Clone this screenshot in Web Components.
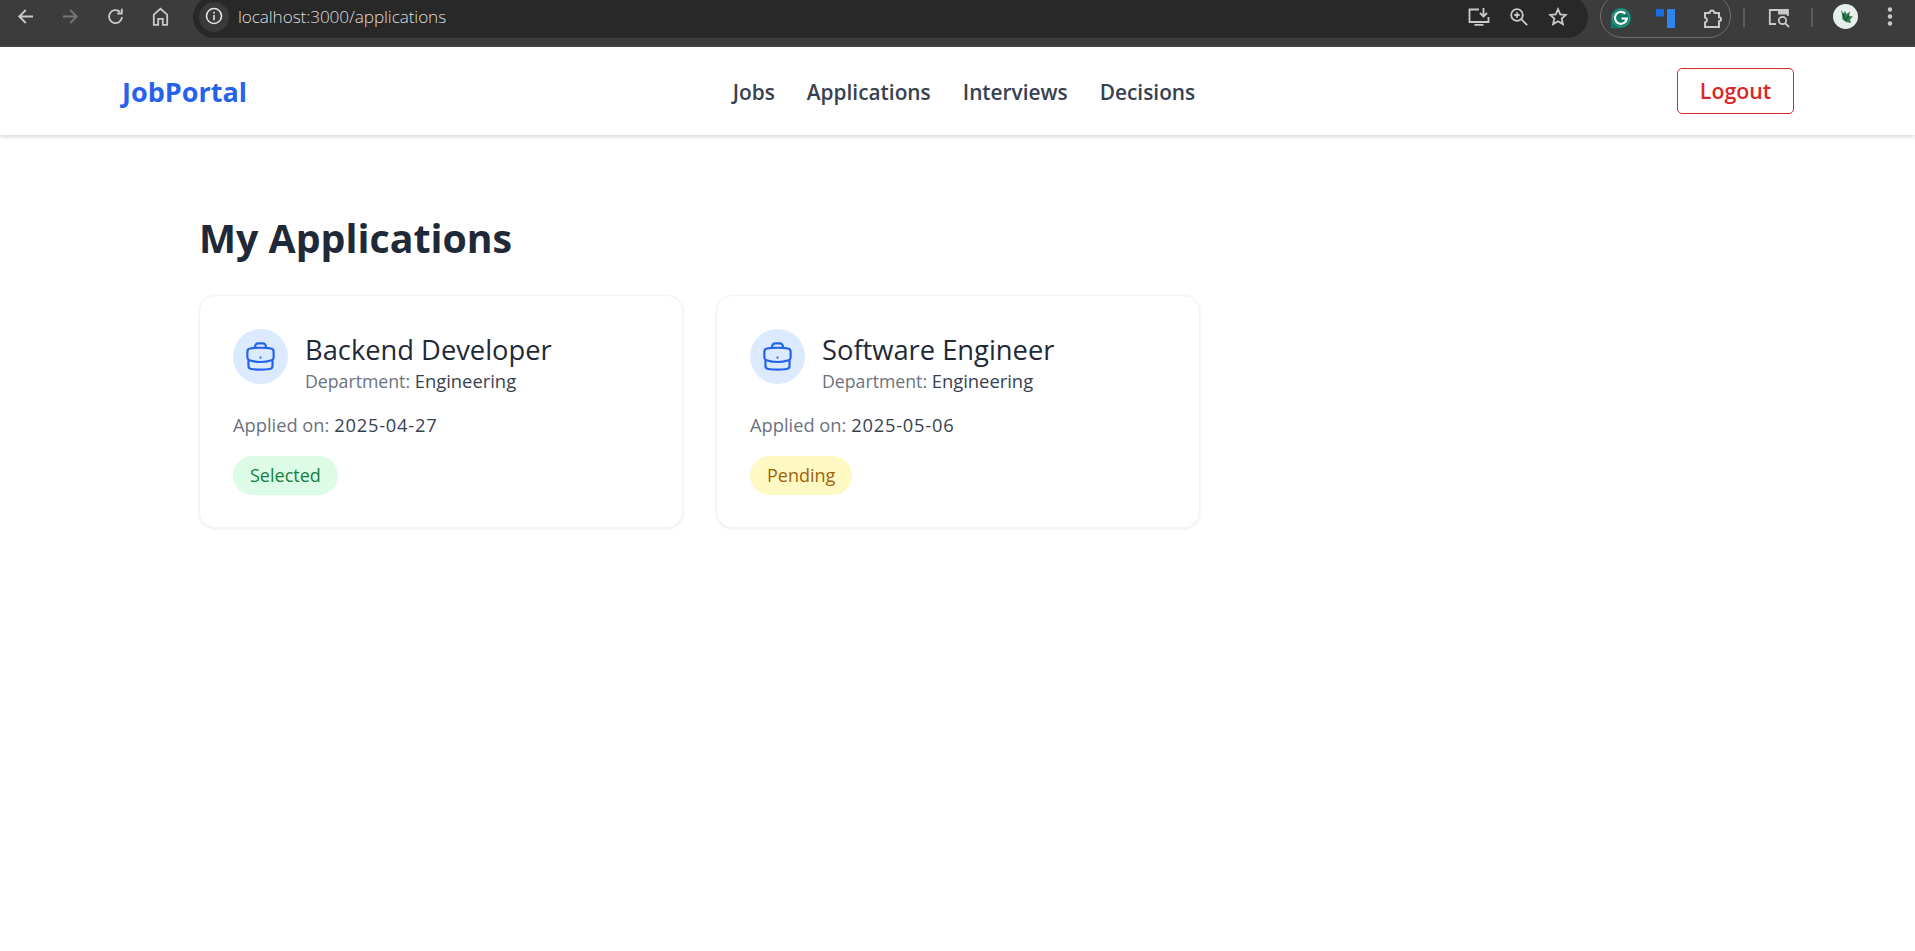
<!DOCTYPE html>
<html lang="en"><head><meta charset="utf-8"><title>JobPortal</title>
<style>
html,body{margin:0;padding:0;background:#fff;height:100%;overflow:hidden}
body{font-family:"Open Sans","Noto Sans",sans-serif;display:flex;flex-direction:column;height:951px}
</style></head><body>
<browser-bar></browser-bar>
<site-nav></site-nav>
<main-page>
  <app-card title-text="Backend Developer" dept="Engineering" date="2025-04-27" status="Selected"></app-card>
  <app-card title-text="Software Engineer" dept="Engineering" date="2025-05-06" status="Pending"></app-card>
</main-page>
<script>
function def(name, html){
  customElements.define(name, class extends HTMLElement{
    constructor(){super();const r=this.attachShadow({mode:'open'});if(typeof html!=='function')r.innerHTML=html;}
    connectedCallback(){ if(typeof html==='function'){this.shadowRoot.innerHTML=html(this);} }
  });
}
const ic='fill="none" stroke="#c9c9c9" stroke-width="1.8"';
def('browser-bar',`<style>
:host{display:flex;align-items:flex-start;height:47px;background:#3c3c3c;box-sizing:border-box;border-bottom:2px solid #464646;flex:none;overflow:hidden}
.btn{width:20px;height:20px;display:flex;flex:none;margin-top:7px}
.left{display:flex;gap:25px;padding-left:16px;width:193px;flex:none;box-sizing:border-box}
.addr{flex:none;width:1395px;height:42px;margin-top:-4px;background:#282828;border-radius:21px;display:flex;align-items:center;box-sizing:border-box;padding-left:6px}
.info{width:30px;height:30px;border-radius:50%;background:#3a3a3a;display:flex;align-items:center;justify-content:center;flex:none}
.url{font:300 17.2px "Open Sans",sans-serif;color:#dcdcdc;margin:-1px 0 0 9px;flex:1;letter-spacing:-.1px}
.acts{display:flex;gap:19px;padding-right:20px;align-items:center}
.ext{margin:-6px 0 0 12px;width:131px;height:44px;border:1.5px solid #6e6e6e;border-radius:22px;box-sizing:border-box;display:flex;align-items:center;justify-content:space-between;padding:4px 7.500px 0 9px;flex:none}
.sep{width:2px;height:19px;background:#5c5c5c;margin-top:8px;flex:none}
.avatar{width:25px;height:25px;border-radius:50%;background:#e8eeea;margin:4px 0 0 20px;display:flex;align-items:center;justify-content:center;flex:none}
</style>
<div class="left">
<svg class="btn" viewBox="0 0 20 20" ${ic}><path d="M17 9.500H3.500M9.800 3 3.200 9.500 9.800 16"/></svg>
<svg class="btn" viewBox="0 0 20 20" fill="none" stroke="#767676" stroke-width="1.8"><path d="M2 9.500h13.500M9.200 3l6.600 6.500L9.200 16"/></svg>
<svg class="btn" viewBox="0 0 20 20" ${ic}><path d="M16 10a6.500 6.500 0 1 1-1.900-5"/><path d="M15.800 1.800V6.500H11.200"/></svg>
<svg class="btn" viewBox="0 0 20 20" ${ic}><path d="M2.800 17.800V7.600L9.500 1.800l6.700 5.800v10.200h-4.400v-6h-4.600v6z"/></svg>
</div>
<div class="addr">
<div class="info"><svg width="18" height="18" viewBox="0 0 18 18" fill="none" stroke="#e3e3e3" stroke-width="1.6" style="margin-top:-2px"><circle cx="9" cy="9" r="7.500"/><path d="M9 8v5.200M9 4.800v1.800"/></svg></div>
<span class="url">localhost:3000/applications</span>
<div class="acts">
<svg width="22" height="20" viewBox="0 0 22 20" ${ic}><path d="M11 2.500H1.500v12.500h19V10M6.500 17.800h9" /><path d="M15.500 1v8M12 6l3.500 3.500L19 6"/></svg>
<svg width="20" height="20" viewBox="0 0 20 20" ${ic}><circle cx="8" cy="8" r="5.800"/><path d="M12.200 12.200l6 6M5.300 8h5.400M8 5.300v5.400"/></svg>
<svg width="20" height="20" viewBox="0 0 20 20" ${ic}><path d="M10 2.200l2.300 5.100 5.500.6-4.100 3.700 1.200 5.500L10 14.300l-4.900 2.800 1.200-5.500L2.200 7.900l5.500-.6z"/></svg>
</div></div>
<div class="ext">
<svg width="22" height="22" viewBox="0 0 22 22"><path d="M11 .8a10.200 10.200 0 0 1 0 20.400H1.400a.6.600 0 0 1-.6-.6V11A10.200 10.200 0 0 1 11 .8z" fill="#0d7a66"/><circle cx="11" cy="11" r="8.600" fill="none" stroke="#4aa593" stroke-width=".8"/><path d="M15.400 6.800a6 6 0 1 0 1.500 4.700h-5.400" fill="none" stroke="#fff" stroke-width="2.200"/></svg>
<svg width="19" height="19" viewBox="0 0 19 19" style="margin-right:2px"><rect x="0" y="0" width="8" height="7.500" fill="#1a6fe0"/><rect x="11" y="0" width="8" height="19" rx="1" fill="#2b86f0"/></svg>
<svg width="21" height="21" viewBox="0 0 21 21" fill="none" stroke="#c9c9c9" stroke-width="2"><path d="M3 5h4.500a2.500 2.500 0 0 1 5 0H17v4.200a2 2 0 0 1 0 4V19H3v-4.500c1.500-.5 2-1.500 2-2.500S4.500 10 3 9.500z"/></svg>
</div>
<div class="sep" style="margin-left:12px"></div>
<svg style="margin:7px 0 0 23px;flex:none" width="22" height="22" viewBox="0 0 22 22" ${ic}><path d="M8 17H1.800V3h18v6"/><path d="M11 3h8.800v3.500H11z" fill="#c9c9c9"/><circle cx="14.500" cy="13.500" r="3.700"/><path d="M17.300 16.300 21 20"/></svg>
<div class="sep" style="margin-left:21px"></div>
<div class="avatar"><svg width="18" height="18" viewBox="0 0 18 18"><path d="M4 2l2.500 3.500L8 3l1.500 3L13 3.500 12 8l4 .5-3 3 1 3.500-5-1-3.500-2.500L5 7z" fill="#2f7d55"/><path d="M6 6l3 6 3-5" fill="none" stroke="#14512f" stroke-width="1.200"/></svg></div>
<svg style="margin:6px 0 0 29px;flex:none" width="6" height="22" viewBox="0 0 6 22" fill="#c9c9c9"><circle cx="3" cy="3.500" r="2.200"/><circle cx="3" cy="10.500" r="2.200"/><circle cx="3" cy="17.500" r="2.200"/></svg>
`);
def('site-nav',`<style>
:host{display:flex;align-items:center;justify-content:space-between;height:88px;background:#fff;box-shadow:0 2px 4px rgba(0,0,0,.15);flex:none;box-sizing:border-box;padding:0 121px 0 122px;position:relative;z-index:1}
.logo{font-size:27px;font-weight:700;color:#2563eb}
.links{display:flex;gap:32px;margin:1px 0 0 4px}
a{font-size:20.85px;font-weight:600;color:#374151;text-decoration:none}
button{font:600 21.3px "Open Sans",sans-serif;color:#dc2626;background:#fff;border:1px solid #dc2626;border-radius:5px;width:117px;height:46px;padding:0;margin-top:-1px}
</style>
<span class="logo">JobPortal</span>
<nav class="links"><a>Jobs</a><a>Applications</a><a>Interviews</a><a>Decisions</a></nav>
<button>Logout</button>`);
def('main-page',`<style>
:host{display:block;padding:81px 0 0 199px;flex:1}
h1{font-size:39.3px;font-weight:700;color:#1f2937;margin:0 0 35px;line-height:44px}
.grid{display:grid;grid-template-columns:484px 484px;gap:33px}
</style><h1>My Applications</h1><div class="grid"><slot></slot></div>`);
def('app-card',el=>{const s=el.getAttribute('status');const sel=s==='Selected';return `<style>
:host{display:block;box-sizing:border-box;height:233px;background:#fff;border:1px solid #f3f4f6;border-radius:16px;box-shadow:0 1px 3px rgba(0,0,0,.08);padding:33px}
.head{display:flex;gap:17px;align-items:flex-start}
.ico{width:55px;height:55px;border-radius:50%;background:#dbeafe;display:flex;align-items:center;justify-content:center;flex:none}
.txt{padding-top:3px}
h2{font-size:27.3px;font-weight:500;color:#1f2937;margin:0;line-height:36px}
.dept{font-size:17.7px;color:#6b7280;line-height:26px;height:26px}
.dept b{font-weight:400;color:#374151;font-size:18.4px;line-height:1}
.date{font-size:18.3px;color:#6b7280;line-height:28px;margin-top:17px}
.date b{font-weight:500;color:#374151;letter-spacing:.8px}
.pill{display:block;width:fit-content;margin-top:17px;padding:0 17px;height:39px;line-height:39px;border-radius:20px;font-size:18px;font-weight:500;background:${sel?'#dcfce7':'#fef9c3'};color:${sel?'#15803d':'#a16207'}}
</style>
<div class="head"><div class="ico"><svg width="35" height="35" viewBox="0 0 24 24" fill="none" stroke="#2563eb" stroke-width="1.5" stroke-linecap="round" stroke-linejoin="round"><path d="M20.250 14.150v4.250c0 1.094-.787 2.036-1.872 2.180-2.087.277-4.216.420-6.378.420s-4.291-.143-6.378-.420c-1.085-.144-1.872-1.086-1.872-2.180v-4.250m16.500 0a2.180 2.180 0 0 0 .75-1.661V8.706c0-1.081-.768-2.015-1.837-2.175a48.114 48.114 0 0 0-3.413-.387m4.500 8.006c-.194.165-.42.295-.673.380A23.978 23.978 0 0 1 12 15.750c-2.648 0-5.195-.429-7.577-1.220a2.016 2.016 0 0 1-.673-.380m0 0A2.180 2.180 0 0 1 3 12.489V8.706c0-1.081.768-2.015 1.837-2.175a48.111 48.111 0 0 1 3.413-.387m7.500 0V5.250A2.250 2.250 0 0 0 13.500 3h-3a2.250 2.250 0 0 0-2.250 2.250v.894m7.500 0a48.667 48.667 0 0 0-7.500 0M12 12.750h.008v.008H12v-.008z"/></svg></div>
<div class="txt"><h2>${el.getAttribute('title-text')}</h2><div class="dept">Department: <b>${el.getAttribute('dept')}</b></div></div></div>
<div class="date">Applied on: <b>${el.getAttribute('date')}</b></div>
<span class="pill">${s}</span>`});
</script>
</body></html>
